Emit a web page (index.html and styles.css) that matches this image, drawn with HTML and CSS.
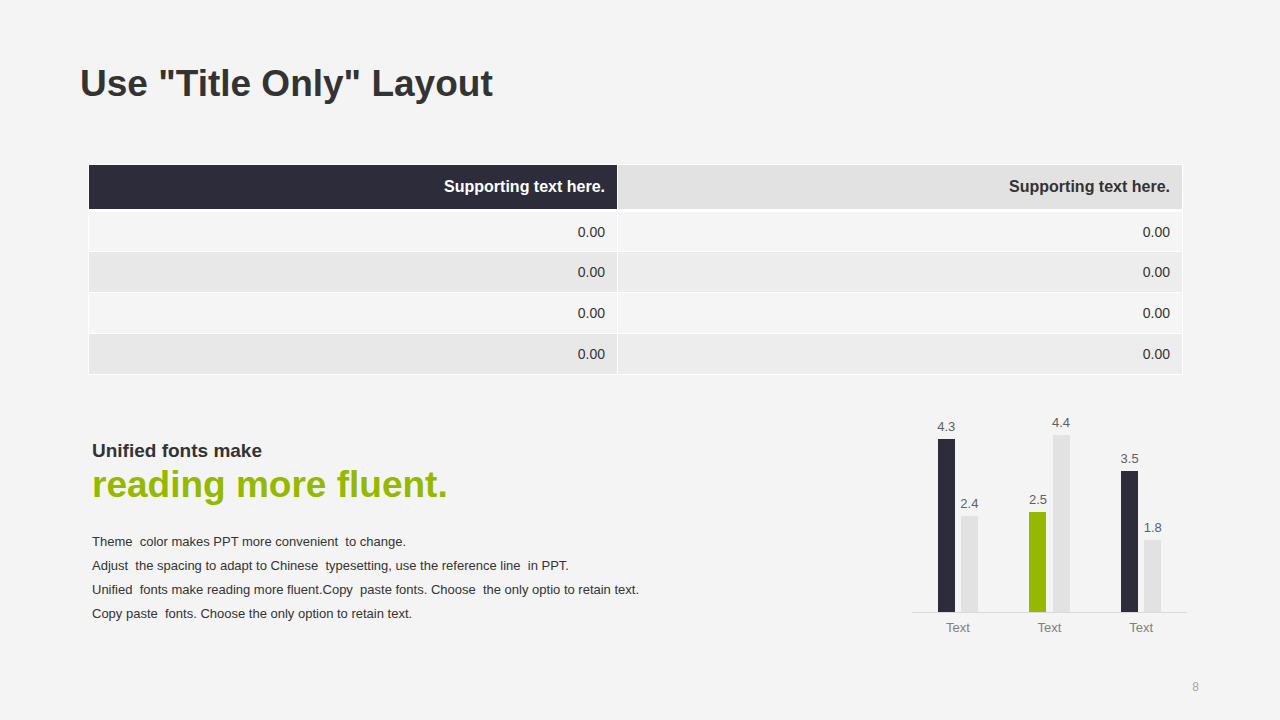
FILE: index.html
```html
<!DOCTYPE html>
<html lang="en">
<head>
<meta charset="utf-8">
<title>Use "Title Only" Layout</title>
<link rel="stylesheet" href="styles.css">
</head>
<body>
<div class="slide">
  <h1 class="title">Use "Title Only" Layout</h1>

  <table class="data">
    <thead>
      <tr>
        <th class="h-dark">Supporting text here.</th>
        <th class="h-light">Supporting text here.</th>
      </tr>
    </thead>
    <tbody>
      <tr class="odd"><td>0.00</td><td>0.00</td></tr>
      <tr class="even"><td>0.00</td><td>0.00</td></tr>
      <tr class="odd"><td>0.00</td><td>0.00</td></tr>
      <tr class="even"><td>0.00</td><td>0.00</td></tr>
    </tbody>
  </table>

  <div class="bottom">
    <div class="copy">
      <div class="lead">Unified fonts make</div>
      <div class="headline">reading more fluent.</div>
      <div class="body">
        <p>Theme&nbsp; color makes PPT more convenient&nbsp; to change.</p>
        <p>Adjust&nbsp; the spacing to adapt to Chinese&nbsp; typesetting, use the reference line&nbsp; in PPT.</p>
        <p>Unified&nbsp; fonts make reading more fluent.Copy&nbsp; paste fonts. Choose&nbsp; the only optio to retain text.</p>
        <p>Copy paste&nbsp; fonts. Choose the only option to retain text.</p>
      </div>
    </div>

    <div class="chart">
      <div class="plot">
        <div class="group">
          <div class="item"><span class="val">4.3</span><div class="bar dark" style="height:173px"></div></div>
          <div class="item"><span class="val">2.4</span><div class="bar light" style="height:96px"></div></div>
        </div>
        <div class="group">
          <div class="item"><span class="val">2.5</span><div class="bar green" style="height:100px"></div></div>
          <div class="item"><span class="val">4.4</span><div class="bar light" style="height:177px"></div></div>
        </div>
        <div class="group">
          <div class="item"><span class="val">3.5</span><div class="bar dark" style="height:141px"></div></div>
          <div class="item"><span class="val">1.8</span><div class="bar light" style="height:72px"></div></div>
        </div>
      </div>
      <div class="cats">
        <span>Text</span><span>Text</span><span>Text</span>
      </div>
    </div>
  </div>

  <div class="footer"><span class="pageno">8</span></div>
</div>
</body>
</html>
```

FILE: styles.css
```css
* { box-sizing: border-box; }

html, body {
  margin: 0;
  padding: 0;
  background: #f4f4f4;
}

.slide {
  width: 1280px;
  height: 720px;
  display: flex;
  flex-direction: column;
  font-family: "Liberation Sans", Arial, sans-serif;
  color: #333333;
  background: #f4f4f4;
}

.title {
  margin: 62px 0 0 80px;
  font-size: 37px;
  line-height: 44px;
  font-weight: bold;
  color: #333333;
}

.data {
  margin: 58px 0 0 88px;
  width: 1095px;
  border-collapse: collapse;
  border: 1px solid #ffffff;
  font-size: 14px;
}

.data th,
.data td {
  text-align: right;
  padding: 0 12px 0 0;
  border-left: 1px solid #ffffff;
  border-right: 1px solid #ffffff;
}

.data th {
  height: 46px;
  font-weight: bold;
  font-size: 16px;
  border-bottom: 3px solid #ffffff;
}

.data th.h-dark {
  width: 529px;
  background: #2d2c3b;
  color: #ffffff;
}

.data th.h-light {
  background: #e2e2e2;
  color: #333333;
}

.data td {
  height: 41px;
  color: #333333;
  border-bottom: 1px solid #ffffff;
}

.data tr.odd td { background: #f5f5f5; }
.data tr.even td:first-child { background: #e8e8e8; }
.data tr.even td:last-child { background: #ededed; }

.bottom {
  display: flex;
  align-items: flex-start;
  margin-top: 36px;
}

.copy {
  flex: 1;
  padding: 29px 0 0 92px;
}

.lead {
  font-size: 19px;
  line-height: 22px;
  font-weight: bold;
  color: #333333;
}

.headline {
  margin-top: 2px;
  font-size: 37px;
  line-height: 42px;
  font-weight: bold;
  color: #95b800;
}

.body {
  margin-top: 24px;
  font-size: 13px;
  line-height: 24px;
  color: #333333;
}

.body p { margin: 0; }

.chart {
  width: 275px;
  margin-right: 93px;
}

.plot {
  height: 202px;
  display: grid;
  grid-template-columns: repeat(3, 1fr);
  border-bottom: 1px solid #d9d9d9;
}

.group {
  display: flex;
  justify-content: center;
  align-items: flex-end;
  gap: 5px;
}

.item {
  display: flex;
  flex-direction: column;
  align-items: center;
}

.val {
  font-size: 13px;
  line-height: 15px;
  margin-bottom: 5px;
  color: #5f5f5f;
}

.bar { width: 17px; }
.bar.dark { background: #2d2c3b; }
.bar.light { background: #e2e2e2; }
.bar.green { background: #95b800; }

.cats {
  display: grid;
  grid-template-columns: repeat(3, 1fr);
  margin-top: 7px;
  text-align: center;
  font-size: 13px;
  line-height: 16px;
  color: #808080;
}

.footer {
  margin-top: auto;
  display: flex;
  justify-content: flex-end;
  padding: 0 81px 26px 0;
}

.pageno {
  font-size: 12px;
  line-height: 14px;
  color: #a6a6a6;
}
```
